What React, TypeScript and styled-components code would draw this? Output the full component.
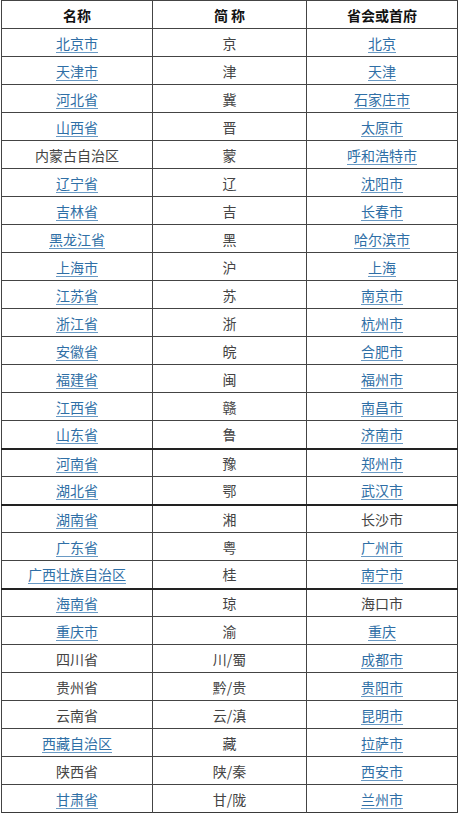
import React from "react";
import styled, { createGlobalStyle } from "styled-components";

const Global = createGlobalStyle`
  html, body { margin: 0; padding: 0; background: #fff; }
  body { font-family: "Noto Sans CJK SC", "Noto Sans", sans-serif; }
`;

const Wrap = styled.div`
  padding: 0 0 0 1px;
`;

const Table = styled.table`
  border-collapse: collapse;
  width: 456px;
  table-layout: fixed;
  border: 1px solid #3a3a3a;
`;

const Row = styled.tr<{ $thick?: boolean }>`
  height: 28px;
  & > td, & > th {
    border-top: ${(p) => (p.$thick ? "2px solid #222" : "1px solid #444")};
  }
`;

const Head = styled.th`
  font-weight: bold;
  font-size: 14px;
  color: #111;
  text-align: center;
  border-left: 1px solid #444;
  padding: 0;
  line-height: 26px;
`;

const Cell = styled.td`
  font-size: 14px;
  color: #444;
  text-align: center;
  border-left: 1px solid #444;
  padding: 0;
  line-height: 26px;
`;

const Link = styled.span`
  color: #2f6fa6;
  text-decoration: underline;
  text-decoration-color: #6a9ac4;
  text-underline-offset: 3px;
`;

type R = [string, boolean, string, string, boolean, boolean?];

const rows: R[] = [
  ["北京市", true, "京", "北京", true],
  ["天津市", true, "津", "天津", true],
  ["河北省", true, "冀", "石家庄市", true],
  ["山西省", true, "晋", "太原市", true],
  ["内蒙古自治区", false, "蒙", "呼和浩特市", true],
  ["辽宁省", true, "辽", "沈阳市", true],
  ["吉林省", true, "吉", "长春市", true],
  ["黑龙江省", true, "黑", "哈尔滨市", true],
  ["上海市", true, "沪", "上海", true],
  ["江苏省", true, "苏", "南京市", true],
  ["浙江省", true, "浙", "杭州市", true],
  ["安徽省", true, "皖", "合肥市", true],
  ["福建省", true, "闽", "福州市", true],
  ["江西省", true, "赣", "南昌市", true],
  ["山东省", true, "鲁", "济南市", true],
  ["河南省", true, "豫", "郑州市", true, true],
  ["湖北省", true, "鄂", "武汉市", true],
  ["湖南省", true, "湘", "长沙市", false, true],
  ["广东省", true, "粤", "广州市", true],
  ["广西壮族自治区", true, "桂", "南宁市", true],
  ["海南省", true, "琼", "海口市", false, true],
  ["重庆市", true, "渝", "重庆", true],
  ["四川省", false, "川/蜀", "成都市", true],
  ["贵州省", false, "黔/贵", "贵阳市", true],
  ["云南省", false, "云/滇", "昆明市", true],
  ["西藏自治区", true, "藏", "拉萨市", true],
  ["陕西省", false, "陕/秦", "西安市", true],
  ["甘肃省", true, "甘/陇", "兰州市", true],
];

const T = ({ text, link }: { text: string; link: boolean }) =>
  link ? <Link>{text}</Link> : <>{text}</>;

export default function App() {
  return (
    <Wrap>
      <Global />
      <Table>
        <colgroup>
          <col style={{ width: 151 }} />
          <col style={{ width: 154 }} />
          <col style={{ width: 151 }} />
        </colgroup>
        <thead>
          <Row>
            <Head>名称</Head>
            <Head>简 称</Head>
            <Head>省会或首府</Head>
          </Row>
        </thead>
        <tbody>
          {rows.map(([a, al, b, c, cl, thick]) => (
            <Row key={a} $thick={thick}>
              <Cell>
                <T text={a} link={al} />
              </Cell>
              <Cell>{b}</Cell>
              <Cell>
                <T text={c} link={cl} />
              </Cell>
            </Row>
          ))}
        </tbody>
      </Table>
    </Wrap>
  );
}
